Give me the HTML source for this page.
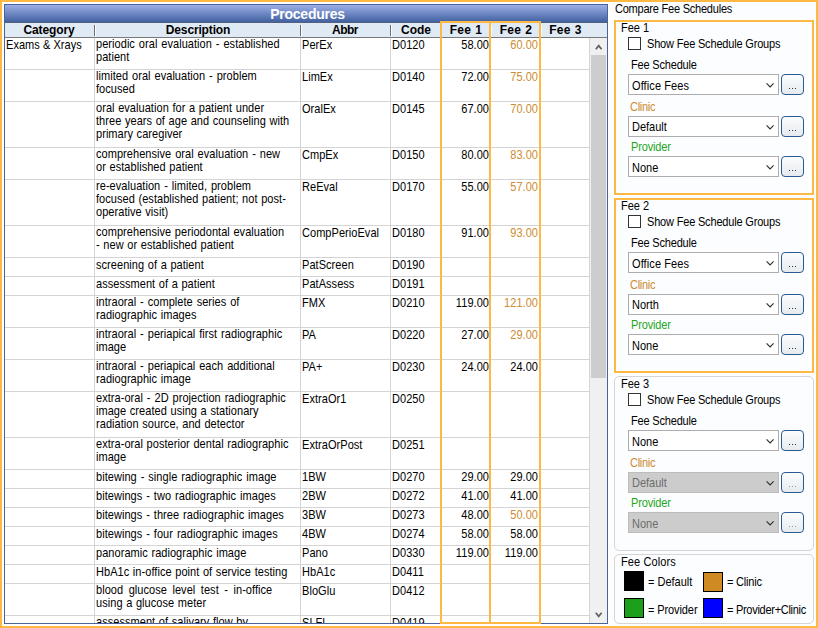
<!DOCTYPE html>
<html><head><meta charset="utf-8"><title>Procedures</title>
<style>
html,body{margin:0;padding:0;}
body{width:818px;height:628px;overflow:hidden;background:#fff;position:relative;font-family:"Liberation Sans",sans-serif;font-size:11px;color:#000;}
div,span{position:absolute;box-sizing:border-box;white-space:nowrap;}
.frame{left:0;top:0;width:818px;height:628px;border:2px solid #feb844;z-index:50;}
.panel{left:610px;top:2px;width:206px;height:624px;background:#fcfdfe;}
.grid{left:4px;top:4px;width:604px;height:620px;border:1px solid #4a6399;overflow:hidden;background:#fff;}
.title{left:0;top:0;width:602px;height:17px;background:linear-gradient(#9cafe6,#4161a0);color:#fff;font-weight:bold;font-size:14px;letter-spacing:-0.25px;line-height:19px;text-align:center;padding-left:3px;}
.hdr{left:0;top:17px;width:602px;height:16px;background:#e0eaf5;border-top:1px solid #56607e;border-bottom:1px solid #787878;}
.hl{top:2px;width:1px;height:11px;background:#6e6e6e;border-right:0;}
.hw{top:2px;width:1px;height:11px;background:#fff;}
.ht{top:0px;height:14px;line-height:14px;font-weight:bold;font-size:12px;text-align:center;}
.body{left:0;top:33px;width:602px;height:585px;overflow:hidden;}
.vl{top:0;width:1px;height:585px;background:#d4d4d4;}
.rl{left:0;width:585px;height:1px;background:#d4d4d4;}
.c{line-height:13px;font-size:11px;transform:scaleY(1.125);transform-origin:0 2px;letter-spacing:0.05px;}
.r{text-align:right;}
.o{color:#cc8c30;}
.sb{left:585px;top:0;width:17px;height:585px;background:#f0f0f0;}
.th{left:1px;top:17px;width:15px;height:323px;background:#cdcdcd;}
.orc{border:2px solid #feb844;z-index:20;}
.gb{border:1px solid #d5d5d5;border-radius:5px;}
.lb{font-size:11px;line-height:13px;transform:scaleY(1.125);transform-origin:0 2px;}
.cb{width:13px;height:13px;border:1px solid #333;background:#fff;}
.cmb{width:151px;height:21px;border:1px solid #adadad;background:#fff;}
.cmb span{left:3px;top:3px;line-height:13px;font-size:11px;transform:scaleY(1.125);transform-origin:0 2px;}
.cmb.dis{background:#cccccc;border-color:#bcbcbc;}
.cmb.dis span{color:#6d6d6d;}
.btn{width:23px;height:21px;border:1px solid #2a5b8f;border-radius:4px;background:linear-gradient(#fbfcfd,#e6ebf0);}
.btn i{position:absolute;top:13px;width:1px;height:1px;background:#333;}
.btn.dis i{background:#9a9a9a;}
.sw{width:20px;height:20px;border:1px solid #000;}
svg{position:absolute;overflow:visible;}
</style></head><body>

<div class="panel"></div>
<div class="grid">
<div class="title">Procedures</div>
<div class="hdr">
<div class="ht" style="left:0px;width:90px;letter-spacing:-0.1px;padding-right:2px">Category</div>
<div class="ht" style="left:90px;width:206px;letter-spacing:-0.15px">Description</div>
<div class="ht" style="left:296px;width:90px;letter-spacing:-0.5px;padding-right:2px">Abbr</div>
<div class="ht" style="left:386px;width:50px;">Code</div>
<div class="ht" style="left:436px;width:50px;letter-spacing:0.35px;word-spacing:0.3px">Fee 1</div>
<div class="ht" style="left:486px;width:50px;letter-spacing:0.35px;word-spacing:0.3px">Fee 2</div>
<div class="ht" style="left:536px;width:49px;letter-spacing:0.35px;word-spacing:0.3px">Fee 3</div>
<div class="hl" style="left:89px"></div><div class="hw" style="left:90px"></div>
<div class="hl" style="left:295px"></div><div class="hw" style="left:296px"></div>
<div class="hl" style="left:385px"></div><div class="hw" style="left:386px"></div>
<div class="hl" style="left:435px"></div><div class="hw" style="left:436px"></div>
<div class="hl" style="left:485px"></div><div class="hw" style="left:486px"></div>
<div class="hl" style="left:535px"></div><div class="hw" style="left:536px"></div>
</div>
<div class="body">
<div class="c" style="left:1px;top:0px">Exams &amp; Xrays</div>
<div class="c" style="left:91px;top:-1px;word-spacing:0.8px">periodic oral evaluation - established</div>
<div class="c" style="left:91px;top:12px;word-spacing:0.5px">patient</div>
<div class="c" style="left:297px;top:0px">PerEx</div>
<div class="c" style="left:387px;top:0px">D0120</div>
<div class="c r" style="left:436px;width:48px;top:0px">58.00</div>
<div class="c r o" style="left:486px;width:47px;top:0px">60.00</div>
<div class="rl" style="top:31px"></div>
<div class="c" style="left:91px;top:31px;word-spacing:0.8px">limited oral evaluation - problem</div>
<div class="c" style="left:91px;top:44px;word-spacing:0.5px">focused</div>
<div class="c" style="left:297px;top:32px">LimEx</div>
<div class="c" style="left:387px;top:32px">D0140</div>
<div class="c r" style="left:436px;width:48px;top:32px">72.00</div>
<div class="c r o" style="left:486px;width:47px;top:32px">75.00</div>
<div class="rl" style="top:63px"></div>
<div class="c" style="left:91px;top:63px;word-spacing:0.5px">oral evaluation for a patient under</div>
<div class="c" style="left:91px;top:76px;word-spacing:0.5px">three years of age and counseling with</div>
<div class="c" style="left:91px;top:89px;word-spacing:0.5px">primary caregiver</div>
<div class="c" style="left:297px;top:64px">OralEx</div>
<div class="c" style="left:387px;top:64px">D0145</div>
<div class="c r" style="left:436px;width:48px;top:64px">67.00</div>
<div class="c r o" style="left:486px;width:47px;top:64px">70.00</div>
<div class="rl" style="top:109px"></div>
<div class="c" style="left:91px;top:109px;word-spacing:0.8px">comprehensive oral evaluation - new</div>
<div class="c" style="left:91px;top:122px;word-spacing:0.5px">or established patient</div>
<div class="c" style="left:297px;top:110px">CmpEx</div>
<div class="c" style="left:387px;top:110px">D0150</div>
<div class="c r" style="left:436px;width:48px;top:110px">80.00</div>
<div class="c r o" style="left:486px;width:47px;top:110px">83.00</div>
<div class="rl" style="top:141px"></div>
<div class="c" style="left:91px;top:141px;word-spacing:0.8px">re-evaluation - limited, problem</div>
<div class="c" style="left:91px;top:154px;word-spacing:0.5px">focused (established patient; not post-</div>
<div class="c" style="left:91px;top:167px;word-spacing:0.5px">operative visit)</div>
<div class="c" style="left:297px;top:142px">ReEval</div>
<div class="c" style="left:387px;top:142px">D0170</div>
<div class="c r" style="left:436px;width:48px;top:142px">55.00</div>
<div class="c r o" style="left:486px;width:47px;top:142px">57.00</div>
<div class="rl" style="top:187px"></div>
<div class="c" style="left:91px;top:187px;word-spacing:0.5px">comprehensive periodontal evaluation</div>
<div class="c" style="left:91px;top:200px;word-spacing:0.5px">- new or established patient</div>
<div class="c" style="left:297px;top:188px">CompPerioEval</div>
<div class="c" style="left:387px;top:188px">D0180</div>
<div class="c r" style="left:436px;width:48px;top:188px">91.00</div>
<div class="c r o" style="left:486px;width:47px;top:188px">93.00</div>
<div class="rl" style="top:219px"></div>
<div class="c" style="left:91px;top:220px;word-spacing:0.5px">screening of a patient</div>
<div class="c" style="left:297px;top:220px">PatScreen</div>
<div class="c" style="left:387px;top:220px">D0190</div>
<div class="rl" style="top:238px"></div>
<div class="c" style="left:91px;top:239px;word-spacing:0.5px">assessment of a patient</div>
<div class="c" style="left:297px;top:239px">PatAssess</div>
<div class="c" style="left:387px;top:239px">D0191</div>
<div class="rl" style="top:257px"></div>
<div class="c" style="left:91px;top:257px;word-spacing:0.8px">intraoral - complete series of</div>
<div class="c" style="left:91px;top:270px;word-spacing:0.5px">radiographic images</div>
<div class="c" style="left:297px;top:258px">FMX</div>
<div class="c" style="left:387px;top:258px">D0210</div>
<div class="c r" style="left:436px;width:48px;top:258px">119.00</div>
<div class="c r o" style="left:486px;width:47px;top:258px">121.00</div>
<div class="rl" style="top:289px"></div>
<div class="c" style="left:91px;top:289px;word-spacing:0.8px">intraoral - periapical first radiographic</div>
<div class="c" style="left:91px;top:302px;word-spacing:0.5px">image</div>
<div class="c" style="left:297px;top:290px">PA</div>
<div class="c" style="left:387px;top:290px">D0220</div>
<div class="c r" style="left:436px;width:48px;top:290px">27.00</div>
<div class="c r o" style="left:486px;width:47px;top:290px">29.00</div>
<div class="rl" style="top:321px"></div>
<div class="c" style="left:91px;top:321px;word-spacing:0.8px">intraoral - periapical each additional</div>
<div class="c" style="left:91px;top:334px;word-spacing:0.5px">radiographic image</div>
<div class="c" style="left:297px;top:322px">PA+</div>
<div class="c" style="left:387px;top:322px">D0230</div>
<div class="c r" style="left:436px;width:48px;top:322px">24.00</div>
<div class="c r" style="left:486px;width:47px;top:322px">24.00</div>
<div class="rl" style="top:353px"></div>
<div class="c" style="left:91px;top:353px;word-spacing:0.8px">extra-oral - 2D projection radiographic</div>
<div class="c" style="left:91px;top:366px;word-spacing:0.5px">image created using a stationary</div>
<div class="c" style="left:91px;top:379px;word-spacing:0.5px">radiation source, and detector</div>
<div class="c" style="left:297px;top:354px">ExtraOr1</div>
<div class="c" style="left:387px;top:354px">D0250</div>
<div class="rl" style="top:399px"></div>
<div class="c" style="left:91px;top:399px;word-spacing:0.5px">extra-oral posterior dental radiographic</div>
<div class="c" style="left:91px;top:412px;word-spacing:0.5px">image</div>
<div class="c" style="left:297px;top:400px">ExtraOrPost</div>
<div class="c" style="left:387px;top:400px">D0251</div>
<div class="rl" style="top:431px"></div>
<div class="c" style="left:91px;top:432px;word-spacing:0.8px">bitewing - single radiographic image</div>
<div class="c" style="left:297px;top:432px">1BW</div>
<div class="c" style="left:387px;top:432px">D0270</div>
<div class="c r" style="left:436px;width:48px;top:432px">29.00</div>
<div class="c r" style="left:486px;width:47px;top:432px">29.00</div>
<div class="rl" style="top:450px"></div>
<div class="c" style="left:91px;top:451px;word-spacing:0.8px">bitewings - two radiographic images</div>
<div class="c" style="left:297px;top:451px">2BW</div>
<div class="c" style="left:387px;top:451px">D0272</div>
<div class="c r" style="left:436px;width:48px;top:451px">41.00</div>
<div class="c r" style="left:486px;width:47px;top:451px">41.00</div>
<div class="rl" style="top:469px"></div>
<div class="c" style="left:91px;top:470px;word-spacing:0.8px">bitewings - three radiographic images</div>
<div class="c" style="left:297px;top:470px">3BW</div>
<div class="c" style="left:387px;top:470px">D0273</div>
<div class="c r" style="left:436px;width:48px;top:470px">48.00</div>
<div class="c r o" style="left:486px;width:47px;top:470px">50.00</div>
<div class="rl" style="top:488px"></div>
<div class="c" style="left:91px;top:489px;word-spacing:0.8px">bitewings - four radiographic images</div>
<div class="c" style="left:297px;top:489px">4BW</div>
<div class="c" style="left:387px;top:489px">D0274</div>
<div class="c r" style="left:436px;width:48px;top:489px">58.00</div>
<div class="c r" style="left:486px;width:47px;top:489px">58.00</div>
<div class="rl" style="top:507px"></div>
<div class="c" style="left:91px;top:508px;word-spacing:0.5px">panoramic radiographic image</div>
<div class="c" style="left:297px;top:508px">Pano</div>
<div class="c" style="left:387px;top:508px">D0330</div>
<div class="c r" style="left:436px;width:48px;top:508px">119.00</div>
<div class="c r" style="left:486px;width:47px;top:508px">119.00</div>
<div class="rl" style="top:526px"></div>
<div class="c" style="left:91px;top:527px;word-spacing:0.5px">HbA1c in-office point of service testing</div>
<div class="c" style="left:297px;top:527px">HbA1c</div>
<div class="c" style="left:387px;top:527px">D0411</div>
<div class="rl" style="top:545px"></div>
<div class="c" style="left:91px;top:545px;word-spacing:2.4px">blood glucose level test - in-office</div>
<div class="c" style="left:91px;top:558px;word-spacing:0.5px">using a glucose meter</div>
<div class="c" style="left:297px;top:546px">BloGlu</div>
<div class="c" style="left:387px;top:546px">D0412</div>
<div class="rl" style="top:577px"></div>
<div class="c" style="left:91px;top:577px;word-spacing:0.5px">assessment of salivary flow by</div>
<div class="c" style="left:91px;top:590px;word-spacing:0.5px">measurement</div>
<div class="c" style="left:297px;top:578px">SLFL</div>
<div class="c" style="left:387px;top:578px">D0419</div>
<div class="rl" style="top:609px"></div>
<div class="vl" style="left:89px"></div>
<div class="vl" style="left:295px"></div>
<div class="vl" style="left:385px"></div>
<div class="vl" style="left:435px"></div>
<div class="vl" style="left:485px"></div>
<div class="vl" style="left:535px"></div>
<div class="vl" style="left:584px"></div>
<div class="sb"><div class="th"></div>
<svg style="left:5px;top:6px" width="8" height="6" viewBox="0 0 8 6"><path d="M0.8 5.2 L3.7 1.6 L6.6 5.2" fill="none" stroke="#606060" stroke-width="1.7"/></svg>
<svg style="left:5px;top:574px" width="8" height="6" viewBox="0 0 8 6"><path d="M0.8 0.8 L3.7 4.4 L6.6 0.8" fill="none" stroke="#606060" stroke-width="1.7"/></svg>
</div>
</div>
</div>
<div class="orc" style="left:440px;top:21px;width:51px;height:603px"></div>
<div class="orc" style="left:489px;top:21px;width:52px;height:603px"></div>
<div class="lb" style="left:615px;top:2px;letter-spacing:-0.22px">Compare Fee Schedules</div>
<div class="orc" style="left:614px;top:20px;width:200px;height:175px"></div>
<div class="lb" style="left:621px;top:21px">Fee 1</div>
<div class="cb" style="left:628px;top:37px"></div>
<div class="lb" style="left:647px;top:37px;letter-spacing:-0.18px">Show Fee Schedule Groups</div>
<div class="lb" style="left:631px;top:58px;letter-spacing:-0.18px">Fee Schedule</div>
<div class="lb" style="left:630px;top:100px;letter-spacing:-0.3px;color:#cc8c30">Clinic</div>
<div class="lb" style="left:631px;top:140px;letter-spacing:-0.15px;color:#1fa51f">Provider</div>
<div class="cmb" style="left:628px;top:74px"><span style="top:4px;letter-spacing:0.1px">Office Fees</span><svg style="left:137px;top:8px" width="9" height="5" viewBox="0 0 9 5"><path d="M0.6 0.4 L4.1 3.9 L7.6 0.4" fill="none" stroke="#2b2b2b" stroke-width="1.1"/></svg></div>
<div class="btn" style="left:781px;top:74px"><i style="left:7px"></i><i style="left:10px"></i><i style="left:13px"></i></div>
<div class="cmb" style="left:628px;top:116px"><span style="top:3px">Default</span><svg style="left:137px;top:8px" width="9" height="5" viewBox="0 0 9 5"><path d="M0.6 0.4 L4.1 3.9 L7.6 0.4" fill="none" stroke="#2b2b2b" stroke-width="1.1"/></svg></div>
<div class="btn" style="left:781px;top:116px"><i style="left:7px"></i><i style="left:10px"></i><i style="left:13px"></i></div>
<div class="cmb" style="left:628px;top:156px"><span style="top:4px">None</span><svg style="left:137px;top:8px" width="9" height="5" viewBox="0 0 9 5"><path d="M0.6 0.4 L4.1 3.9 L7.6 0.4" fill="none" stroke="#2b2b2b" stroke-width="1.1"/></svg></div>
<div class="btn" style="left:781px;top:156px"><i style="left:7px"></i><i style="left:10px"></i><i style="left:13px"></i></div>
<div class="orc" style="left:614px;top:198px;width:200px;height:175px"></div>
<div class="lb" style="left:621px;top:199px">Fee 2</div>
<div class="cb" style="left:628px;top:215px"></div>
<div class="lb" style="left:647px;top:215px;letter-spacing:-0.18px">Show Fee Schedule Groups</div>
<div class="lb" style="left:631px;top:236px;letter-spacing:-0.18px">Fee Schedule</div>
<div class="lb" style="left:630px;top:278px;letter-spacing:-0.3px;color:#cc8c30">Clinic</div>
<div class="lb" style="left:631px;top:318px;letter-spacing:-0.15px;color:#1fa51f">Provider</div>
<div class="cmb" style="left:628px;top:252px"><span style="top:4px;letter-spacing:0.1px">Office Fees</span><svg style="left:137px;top:8px" width="9" height="5" viewBox="0 0 9 5"><path d="M0.6 0.4 L4.1 3.9 L7.6 0.4" fill="none" stroke="#2b2b2b" stroke-width="1.1"/></svg></div>
<div class="btn" style="left:781px;top:252px"><i style="left:7px"></i><i style="left:10px"></i><i style="left:13px"></i></div>
<div class="cmb" style="left:628px;top:294px"><span style="top:3px">North</span><svg style="left:137px;top:8px" width="9" height="5" viewBox="0 0 9 5"><path d="M0.6 0.4 L4.1 3.9 L7.6 0.4" fill="none" stroke="#2b2b2b" stroke-width="1.1"/></svg></div>
<div class="btn" style="left:781px;top:294px"><i style="left:7px"></i><i style="left:10px"></i><i style="left:13px"></i></div>
<div class="cmb" style="left:628px;top:334px"><span style="top:4px">None</span><svg style="left:137px;top:8px" width="9" height="5" viewBox="0 0 9 5"><path d="M0.6 0.4 L4.1 3.9 L7.6 0.4" fill="none" stroke="#2b2b2b" stroke-width="1.1"/></svg></div>
<div class="btn" style="left:781px;top:334px"><i style="left:7px"></i><i style="left:10px"></i><i style="left:13px"></i></div>
<div class="gb" style="left:614px;top:376px;width:200px;height:175px"></div>
<div class="lb" style="left:621px;top:377px">Fee 3</div>
<div class="cb" style="left:628px;top:393px"></div>
<div class="lb" style="left:647px;top:393px;letter-spacing:-0.18px">Show Fee Schedule Groups</div>
<div class="lb" style="left:631px;top:414px;letter-spacing:-0.18px">Fee Schedule</div>
<div class="lb" style="left:630px;top:456px;letter-spacing:-0.3px;color:#cc8c30">Clinic</div>
<div class="lb" style="left:631px;top:496px;letter-spacing:-0.15px;color:#1fa51f">Provider</div>
<div class="cmb" style="left:628px;top:430px"><span style="top:4px">None</span><svg style="left:137px;top:8px" width="9" height="5" viewBox="0 0 9 5"><path d="M0.6 0.4 L4.1 3.9 L7.6 0.4" fill="none" stroke="#2b2b2b" stroke-width="1.1"/></svg></div>
<div class="btn" style="left:781px;top:430px"><i style="left:7px"></i><i style="left:10px"></i><i style="left:13px"></i></div>
<div class="cmb dis" style="left:628px;top:472px"><span style="top:3px">Default</span><svg style="left:137px;top:8px" width="9" height="5" viewBox="0 0 9 5"><path d="M0.6 0.4 L4.1 3.9 L7.6 0.4" fill="none" stroke="#2b2b2b" stroke-width="1.1"/></svg></div>
<div class="btn dis" style="left:781px;top:472px"><i style="left:7px"></i><i style="left:10px"></i><i style="left:13px"></i></div>
<div class="cmb dis" style="left:628px;top:512px"><span style="top:4px">None</span><svg style="left:137px;top:8px" width="9" height="5" viewBox="0 0 9 5"><path d="M0.6 0.4 L4.1 3.9 L7.6 0.4" fill="none" stroke="#2b2b2b" stroke-width="1.1"/></svg></div>
<div class="btn dis" style="left:781px;top:512px"><i style="left:7px"></i><i style="left:10px"></i><i style="left:13px"></i></div>
<div class="gb" style="left:614px;top:554px;width:200px;height:70px"></div>
<div class="lb" style="left:621px;top:555px;letter-spacing:0.1px">Fee Colors</div>
<div class="sw" style="left:624px;top:571px;background:#000"></div>
<div class="lb" style="left:648px;top:575px">= Default</div>
<div class="sw" style="left:703px;top:572px;background:#cf8a24"></div>
<div class="lb" style="left:727px;top:575px;letter-spacing:-0.2px">= Clinic</div>
<div class="sw" style="left:624px;top:598px;background:#1ca01c"></div>
<div class="lb" style="left:648px;top:603px;letter-spacing:-0.1px">= Provider</div>
<div class="sw" style="left:703px;top:598px;background:#0000ff"></div>
<div class="lb" style="left:727px;top:603px;letter-spacing:-0.28px">= Provider+Clinic</div>
<div class="frame"></div>
</body></html>
